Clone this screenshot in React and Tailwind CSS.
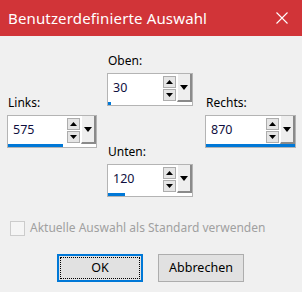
import React from "react";

const FONT = { fontFamily: '"Noto Sans", "Open Sans", sans-serif' };

function UpTri() {
  return (
    <svg width="7" height="4" viewBox="0 0 7 4"><polygon points="0,4 7,4 3.5,0" fill="#000" /></svg>
  );
}
function DownTri({ w = 7, h = 4 }) {
  return (
    <svg width={w} height={h} viewBox={`0 0 ${w} ${h}`}><polygon points={`0,0 ${w},0 ${w / 2},${h}`} fill="#000" /></svg>
  );
}

function Spin({ label, value, bar, w }) {
  return (
    <div className="flex flex-col">
      <div className="text-[12px] leading-[16px] text-black pl-[1px]">{label}</div>
      <div className="mt-[4px] flex h-[33px] flex-col border border-[#b4b4b4] bg-white" style={{ width: w }}>
        <div className="flex flex-1 items-stretch">
          <div className="flex flex-1 items-center pl-[5px] pt-[1px] text-[12.5px] text-[#101040]">{value}</div>
          <div className="flex flex-col justify-center gap-[1px] pr-[1px]">
            <div className="flex h-[12px] w-[13px] items-center justify-center border border-[#adadad] bg-[#e5e5e5]"><UpTri /></div>
            <div className="flex h-[12px] w-[13px] items-center justify-center border border-[#adadad] bg-[#e5e5e5]"><DownTri /></div>
          </div>
          <div className="flex w-[15px] items-center justify-center border-r-2 border-b-2 border-[#8a8a8a] bg-[#eeeeee] border-l border-l-white">
            <DownTri w={8} h={5} />
          </div>
        </div>
        <div className="h-[3px] w-full">
          <div className="h-[3px] bg-[#0078d7]" style={{ width: bar }} />
        </div>
      </div>
    </div>
  );
}

export default function App() {
  return (
    <div className="flex h-[292px] w-[302px] flex-col bg-[#f0f0f0]" style={FONT}>
      <div className="flex h-[36px] items-center justify-between bg-[#d13438] pl-[8px] pr-[14px]">
        <span className="text-[15px] tracking-[0.15px] text-white">Benutzerdefinierte Auswahl</span>
        <svg width="12" height="12" viewBox="0 0 12 12">
          <path d="M0.5 0.5 L11.5 11.5 M11.5 0.5 L0.5 11.5" stroke="#fff" strokeWidth="1.1" />
        </svg>
      </div>
      <div className="flex pl-[7px] pt-[17px]">
        <div className="pt-[42px]">
          <Spin label="Links:" value="575" bar="55px" w="90px" />
        </div>
        <div className="ml-[10px] flex flex-col">
          <Spin label="Oben:" value="30" bar="3px" w="86px" />
          <div className="mt-[38px]">
            <Spin label="Unten:" value="120" bar="17px" w="86px" />
          </div>
        </div>
        <div className="ml-[12px] pt-[42px]">
          <Spin label="Rechts:" value="870" bar="100%" w="91px" />
        </div>
      </div>
      <div className="mt-[22px] flex items-center pl-[10px]">
        <div className="h-[15px] w-[15px] border border-[#cccccc] bg-[#f5f5f5]" />
        <span className="ml-[5px] text-[12px] text-[#a0a0a0]">Aktuelle Auswahl als Standard verwenden</span>
      </div>
      <div className="mt-[17px] flex gap-[15px] pl-[57px]">
        <div className="flex h-[28px] w-[86px] items-center justify-center border-2 border-[#0078d7] bg-[#e1e1e1] p-[1px]">
          <div className="flex h-full w-full items-center justify-center border border-dotted border-black text-[12.5px] text-black">OK</div>
        </div>
        <div className="flex h-[28px] w-[86px] items-center justify-center border border-[#adadad] bg-[#e1e1e1] text-[12.5px] text-black">Abbrechen</div>
      </div>
    </div>
  );
}
